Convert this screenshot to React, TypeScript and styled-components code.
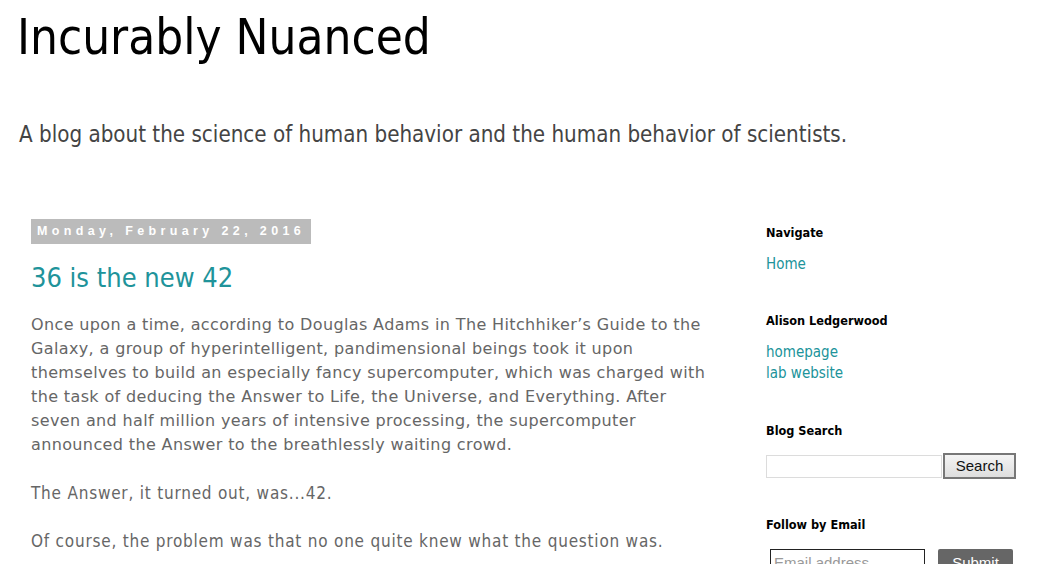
import React from "react";
import styled, { createGlobalStyle } from "styled-components";

const Global = createGlobalStyle`
  html, body { margin: 0; padding: 0; background: #fff; }
  body { overflow: hidden; }
`;

const humanist = `"DejaVu Sans Condensed", "DejaVu Sans", sans-serif`;

const Page = styled.div`
  width: 1057px;
  height: 564px;
  overflow: hidden;
  font-family: ${humanist};
`;

const Header = styled.header`
  padding: 6px 0 0 17px;
`;

const Title = styled.h1`
  margin: 0;
  font-family: ${humanist};
  font-weight: normal;
  font-size: 49px;
  line-height: 64px;
  color: #000;
`;

const Tagline = styled.p`
  margin: 51px 0 0 2px;
  font-family: ${humanist};
  font-size: 22.2px;
  line-height: 26px;
  color: #444;
`;

const Columns = styled.div`
  display: flex;
  margin-top: 72px;
`;

const Main = styled.main`
  width: 676px;
  padding-left: 31px;
  margin-right: 59px;
`;

const DateHeader = styled.h2`
  display: inline-block;
  margin: 0;
  padding: 0 6px;
  height: 25px;
  line-height: 25px;
  background: #bbbbbb;
  color: #fff;
  font-family: "Liberation Sans", Arial, sans-serif;
  font-weight: bold;
  font-size: 12.5px;
  letter-spacing: 4.37px;
`;

const PostTitle = styled.h3`
  margin: 18px 0 0;
  font-family: ${humanist};
  font-weight: normal;
  font-size: 27px;
  line-height: 32px;
  color: #20939a;
`;

const Body = styled.div<{ $font: string; $size: number; $spacing: number }>`
  font-family: ${(p) => p.$font};
  font-size: ${(p) => p.$size}px;
  letter-spacing: ${(p) => p.$spacing}px;
  line-height: 24px;
  color: #666;
`;

const Para = styled.p<{ $gap: number }>`
  margin: ${(p) => p.$gap}px 0 0;
`;

const Sidebar = styled.aside`
  width: 260px;
  display: flex;
  flex-direction: column;
`;

const Widget = styled.section<{ $top: number }>`
  margin-top: ${(p) => p.$top}px;
`;

const WidgetTitle = styled.h2`
  margin: 0;
  font-family: ${humanist};
  font-weight: bold;
  font-size: 12.6px;
  line-height: 18px;
  color: #000;
`;

const LinkList = styled.ul`
  list-style: none;
  margin: 12px 0 0;
  padding: 0;
`;

const LinkItem = styled.li`
  font-family: ${humanist};
  font-size: 15px;
  line-height: 21px;
  color: #20939a;
`;

const SearchRow = styled.div`
  display: flex;
  align-items: center;
  margin-top: 13px;
`;

const SearchInput = styled.div`
  box-sizing: border-box;
  width: 176px;
  height: 23px;
  border: 1px solid #dcdcdc;
`;

const SearchButton = styled.div`
  box-sizing: border-box;
  width: 73px;
  height: 26px;
  margin-left: 1px;
  border: 2px solid #777;
  background: linear-gradient(#f4f4f4, #dedede);
  font-family: "Liberation Sans", Arial, sans-serif;
  font-size: 15px;
  line-height: 22px;
  text-align: center;
  color: #111;
`;

const EmailRow = styled.div`
  display: flex;
  align-items: flex-start;
  margin-top: 15px;
  padding-left: 4px;
`;

const EmailInput = styled.div`
  box-sizing: border-box;
  width: 155px;
  height: 30px;
  border: 1px solid #222;
  padding: 2px 3px;
  font-family: "Liberation Sans", Arial, sans-serif;
  font-size: 15px;
  line-height: 22px;
  color: #999;
  white-space: nowrap;
  overflow: hidden;
`;

const SubmitButton = styled.div`
  width: 75px;
  height: 30px;
  margin-left: 13px;
  border-radius: 2px;
  background: #666;
  color: #fff;
  font-family: "Liberation Sans", Arial, sans-serif;
  font-size: 15px;
  line-height: 28px;
  text-align: center;
`;

export default function App() {
  return (
    <Page>
      <Global />
      <Header>
        <Title>Incurably Nuanced</Title>
        <Tagline>
          A blog about the science of human behavior and the human behavior of scientists.
        </Tagline>
      </Header>
      <Columns>
        <Main>
          <DateHeader>Monday, February 22, 2016</DateHeader>
          <PostTitle>36 is the new 42</PostTitle>
          <Body $font={`"DejaVu Sans", Verdana, sans-serif`} $size={16} $spacing={0.37}>
            <Para $gap={19}>
              Once upon a time, according to Douglas Adams in The Hitchhiker’s Guide to the
              Galaxy, a group of hyperintelligent, pandimensional beings took it upon
              themselves to build an especially fancy supercomputer, which was charged with
              the task of deducing the Answer to Life, the Universe, and Everything. After
              seven and half million years of intensive processing, the supercomputer
              announced the Answer to the breathlessly waiting crowd.
            </Para>
          </Body>
          <Body $font={`"DejaVu Sans Condensed", Tahoma, sans-serif`} $size={17} $spacing={0.78}>
            <Para $gap={24}>The Answer, it turned out, was...42.</Para>
            <Para $gap={24}>
              Of course, the problem was that no one quite knew what the question was.
            </Para>
          </Body>
        </Main>
        <Sidebar>
          <Widget $top={5}>
            <WidgetTitle>Navigate</WidgetTitle>
            <LinkList>
              <LinkItem>Home</LinkItem>
            </LinkList>
          </Widget>
          <Widget $top={37}>
            <WidgetTitle>Alison Ledgerwood</WidgetTitle>
            <LinkList>
              <LinkItem>homepage</LinkItem>
              <LinkItem>lab website</LinkItem>
            </LinkList>
          </Widget>
          <Widget $top={38}>
            <WidgetTitle>Blog Search</WidgetTitle>
            <SearchRow>
              <SearchInput />
              <SearchButton>Search</SearchButton>
            </SearchRow>
          </Widget>
          <Widget $top={37}>
            <WidgetTitle>Follow by Email</WidgetTitle>
            <EmailRow>
              <EmailInput>Email address...</EmailInput>
              <SubmitButton>Submit</SubmitButton>
            </EmailRow>
          </Widget>
        </Sidebar>
      </Columns>
    </Page>
  );
}
